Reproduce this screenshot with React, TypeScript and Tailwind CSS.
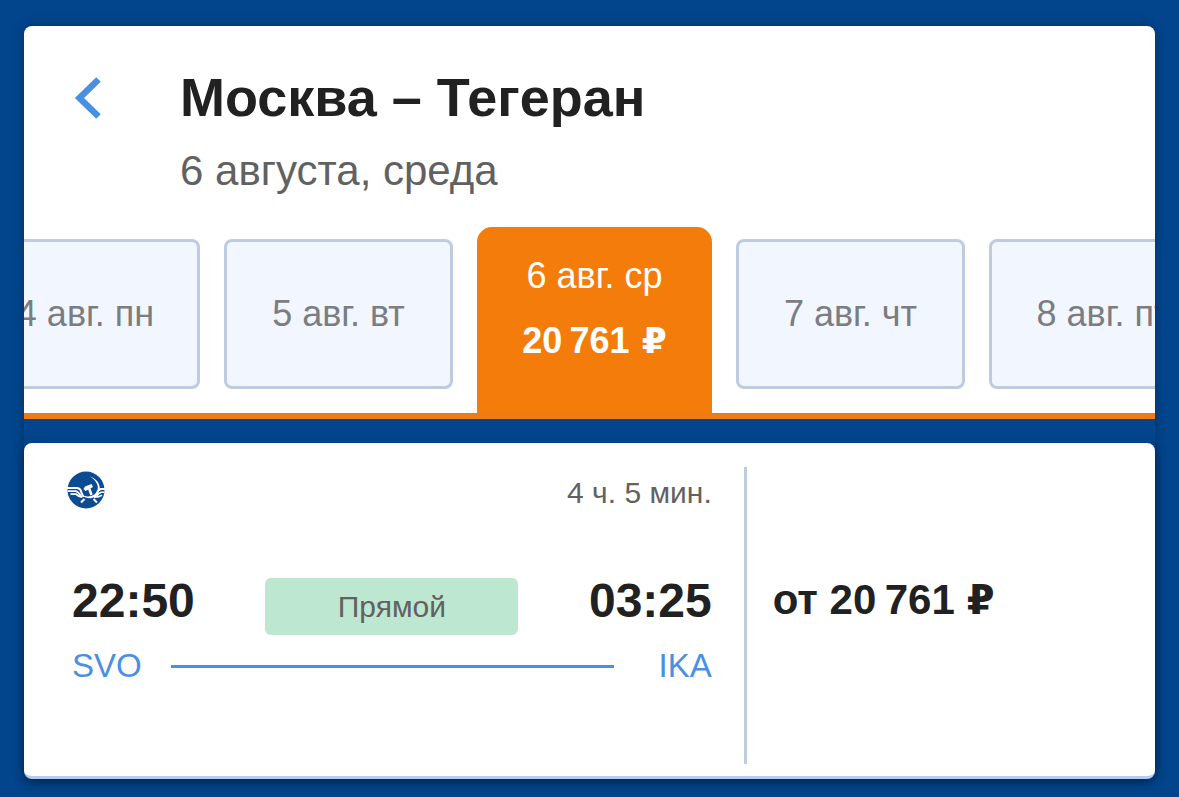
import React from "react";

const days = [
  { date: "4 авг. пн" },
  { date: "5 авг. вт" },
  { date: "6 авг. ср", price: "20\u2009761" },
  { date: "7 авг. чт" },
  { date: "8 авг. пт" },
];

const AirlineLogo = () => (
  <svg width="38" height="38" viewBox="0 0 38 38" role="img" aria-label="Аэрофлот">
    <circle cx="19" cy="19" r="18.5" fill="#0b4b93" />
    {/* wings */}
    <g fill="none" stroke="#fff">
      <path d="M0 17H10Q14 17.500 14.500 22L16.500 26" strokeWidth="2" />
      <path d="M1 20.200H9Q11.500 21 14 25.500" strokeWidth="1.800" />
      <path d="M3.500 23.200H9Q11 25.500 15 26" strokeWidth="1.800" />
      <path d="M38 18H34Q31 18.500 30 22L27.500 26" strokeWidth="1.800" />
      <path d="M37 21.200H34Q32 22 29.500 25.500" strokeWidth="1.600" />
      <path d="M35 24.200Q32 26.500 27 26.300" strokeWidth="1.600" />
    </g>
    {/* sickle */}
    <path
      d="M23 5.500C31 8.500 34.500 15 32 20.500C29 28 20.500 29.500 15 24C21 27 28.500 25 30.500 19.500C32 14.500 29 9 23 5.500Z"
      fill="#fff"
    />
    {/* hammer */}
    <path d="M16.500 18L18 15.500L24.500 13L26 16L18.500 20Z" fill="#fff" />
    <path d="M21.800 16.500L24.500 24" stroke="#fff" strokeWidth="2.500" fill="none" />
    <path d="M17.500 28L14 31.500M26.500 28L30 31.500" stroke="#fff" strokeWidth="2" fill="none" />
  </svg>
);

const DayTab = ({ date, price }: { date: string; price?: string }) => {
  if (price) {
    return (
      <button
        type="button"
        aria-pressed="true"
        className="flex h-[186px] w-[235px] shrink-0 flex-col items-center gap-[23px] rounded-t-[15px] bg-[#f37c0b] pt-7 text-white"
      >
        <span className="text-[36px] leading-[42px]">{date}</span>
        <span className="flex items-baseline gap-3 text-[36px] font-bold leading-[42px]">
          {price}
          <span className="font-['DejaVu_Sans'] text-[36px]">₽</span>
        </span>
      </button>
    );
  }

  return (
    <button
      type="button"
      aria-pressed="false"
      className="mb-6 h-[150px] w-[229px] shrink-0 rounded-lg border-[3px] border-[#bfcbdf] bg-[#f2f6fe] text-[36px] text-[#7b7d82]"
    >
      {date}
    </button>
  );
};

const SearchHeader = () => (
  <section className="overflow-hidden rounded-t-lg bg-white">
    <div className="flex items-start pt-[41px]">
      <button type="button" aria-label="Назад" className="ml-[50px] mt-[9px] shrink-0">
        <svg width="28" height="44" viewBox="0 0 28 44" fill="none">
          <path d="M24.500 3.500L5.500 22L24.500 40.500" stroke="#4a90e2" strokeWidth="6.500" />
        </svg>
      </button>
      <div className="ml-[78px]">
        <h1 className="text-[54px] font-bold leading-[60px] text-[#212121]">Москва – Тегеран</h1>
        <p className="mt-5 text-[42px] leading-[48px] text-[#616161]">6 августа, среда</p>
      </div>
    </div>
    <div className="mt-8 overflow-hidden border-b-[6px] border-[#ee7c13]">
      <div className="-ml-[53px] flex items-end gap-6">
        {days.map((day) => (
          <DayTab key={day.date} {...day} />
        ))}
      </div>
    </div>
  </section>
);

const FlightCard = () => (
  <article className="mt-6 grid grid-cols-[7fr_4fr] rounded-lg border-b-[3px] border-[#b3cdf0] bg-white shadow-[0_4px_12px_rgba(0,0,0,0.3)]">
    <div className="pb-[90px] pl-12 pr-8 pt-7">
      <div className="flex h-10 items-start justify-between">
        <div className="-ml-[5px]">
          <AirlineLogo />
        </div>
        <span className="self-end text-[30px] leading-9 text-[#616161]">4 ч. 5 мин.</span>
      </div>
      <div className="mt-[62px] flex items-start justify-between text-[#212121]">
        <time className="text-[48px] font-bold leading-[56px]">22:50</time>
        <span className="mt-[5px] w-[253px] rounded-md bg-[#bde7d0] text-center text-[30px] leading-[57px] text-[#616161]">
          Прямой
        </span>
        <time className="text-[48px] font-bold leading-[56px]">03:25</time>
      </div>
      <div className="mt-[11px] flex items-center text-[33px] leading-10 text-[#4a90e2]">
        <span>SVO</span>
        <div className="ml-[29px] mr-[45px] h-[3px] flex-1 bg-[#4a90e2]" />
        <span>IKA</span>
      </div>
    </div>
    <div className="mb-3 mt-6 border-l-[3px] border-[#bfcbdf] pl-[26px] pt-[109px]">
      <p className="flex items-baseline gap-3 whitespace-nowrap text-[42px] font-bold leading-[48px] text-[#212121]">
        от 20{"\u2009"}761
        <span className="font-['DejaVu_Sans'] text-[40px]">₽</span>
      </p>
    </div>
  </article>
);

export default function App() {
  return (
    <div className="min-h-screen bg-[#02458d] px-6 pb-[18px] pt-[26px] font-['Liberation_Sans',Arial,sans-serif]">
      <main className="rounded-lg shadow-[0_0_12px_rgba(0,0,0,0.3)]">
        <SearchHeader />
        <FlightCard />
      </main>
    </div>
  );
}
